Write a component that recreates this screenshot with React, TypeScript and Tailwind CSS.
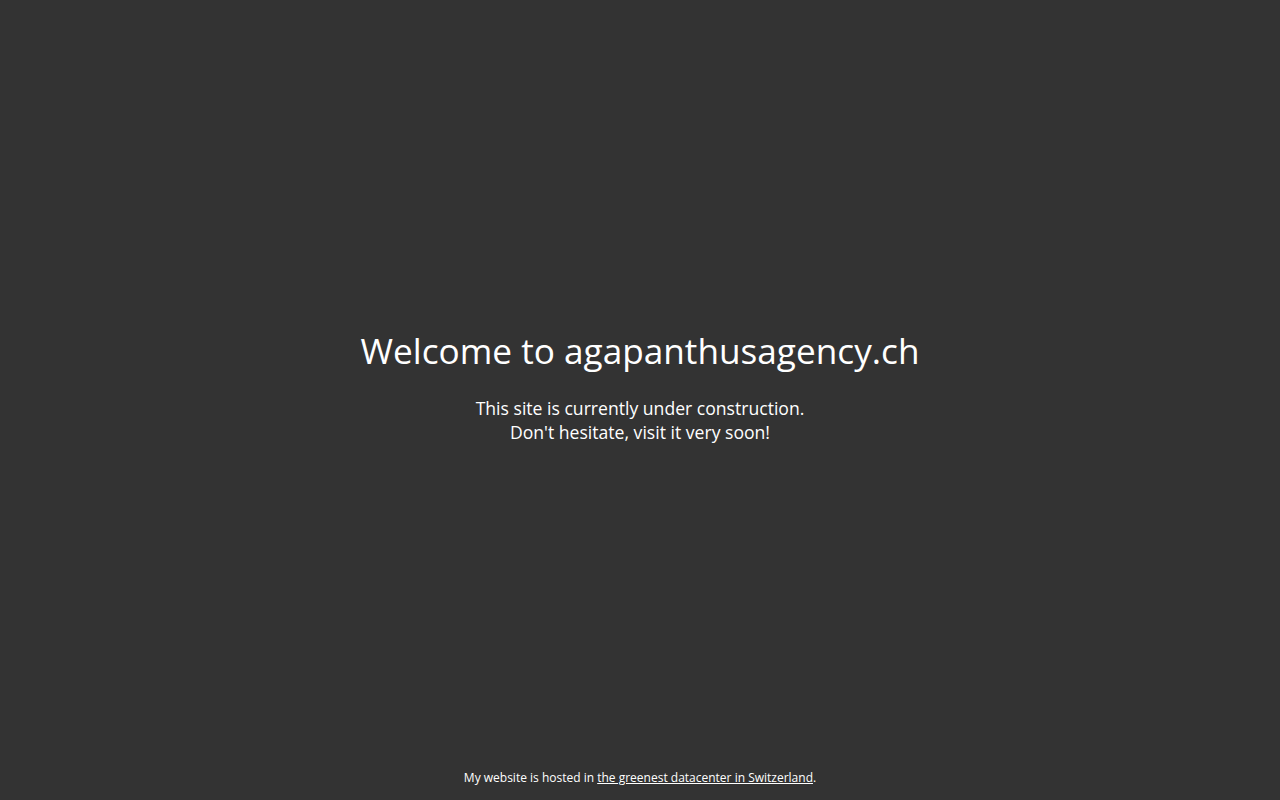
export default function App() {
  return (
    <div className="min-h-screen flex flex-col bg-[#333333] text-white font-['Open_Sans',sans-serif]">
      <main className="flex-1 flex flex-col items-center justify-center text-center pt-[1px]">
        <h1 className="text-[35.2px] leading-[48px] font-normal">Welcome to agapanthusagency.ch</h1>
        <p className="mt-[22px] text-[17.6px] leading-[24px]">
          This site is currently under construction.
          <br />
          Don't hesitate, visit it very soon!
        </p>
      </main>
      <footer className="text-center text-[12px] leading-[18px] pb-[13px]">
        My website is hosted in{' '}
        <a href="#" className="underline">the greenest datacenter in Switzerland</a>.
      </footer>
    </div>
  );
}
